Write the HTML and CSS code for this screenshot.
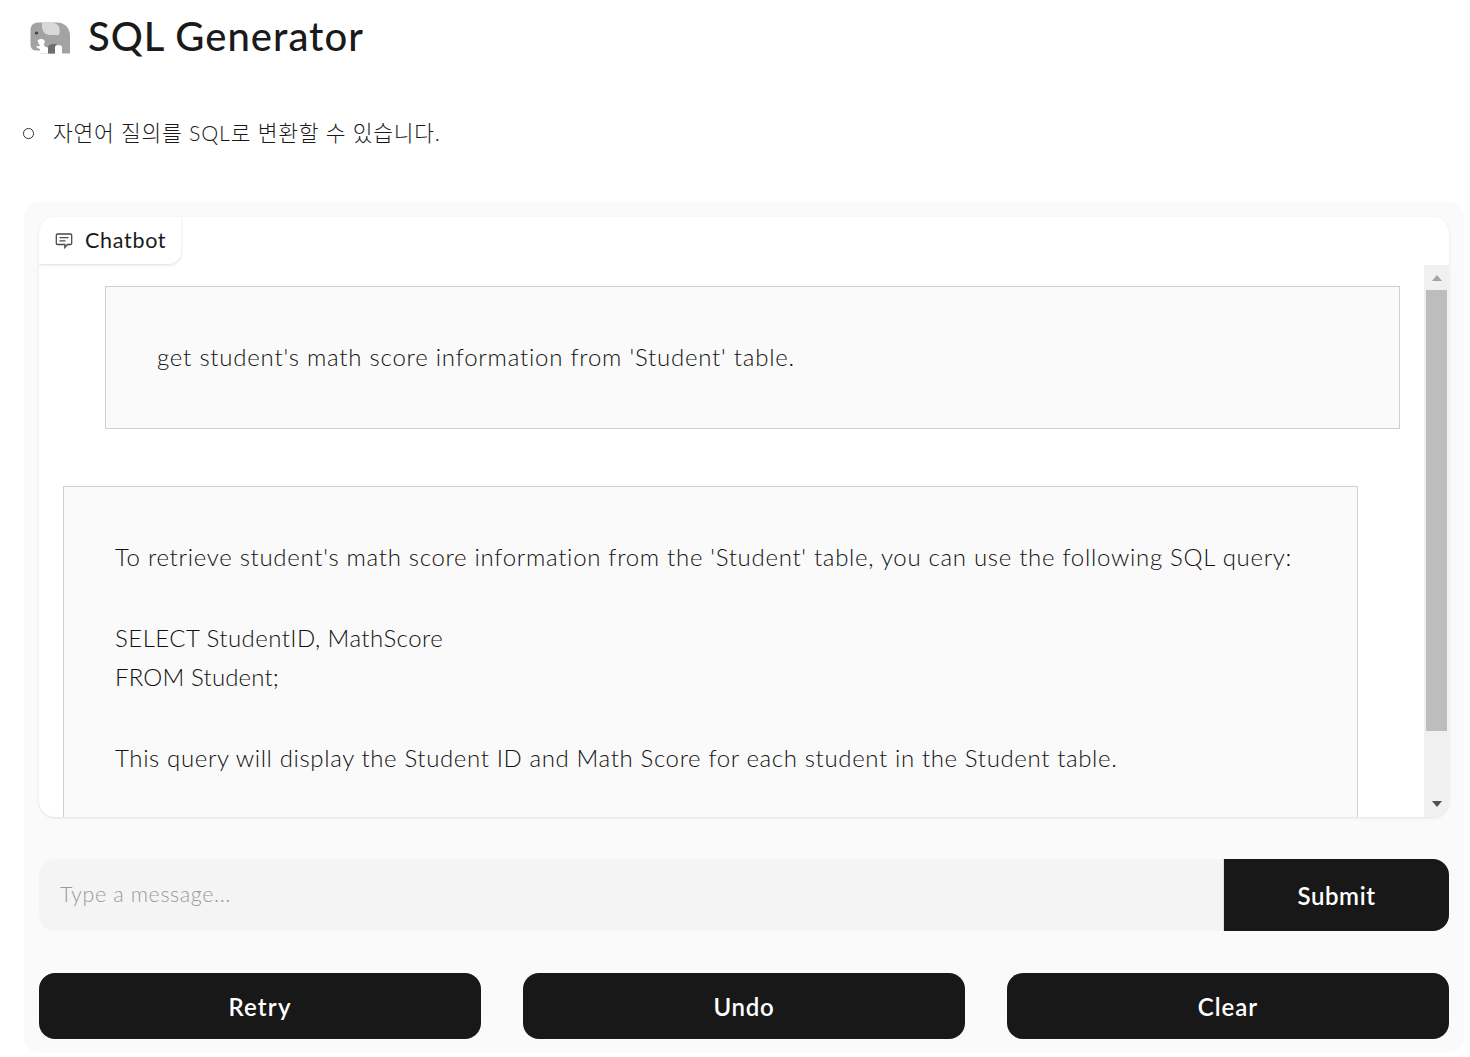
FILE: index.html
```html
<!DOCTYPE html>
<html lang="ko">
<head>
<meta charset="utf-8">
<title>SQL Generator</title>
<link rel="stylesheet" href="styles.css">
</head>
<body>
<header class="title">
  <svg class="elephant" viewBox="0 0 40 32" width="40" height="32" aria-hidden="true">
    <path fill="#a3a3a3" d="M8 .5h19C35 .5 40 6 40 14v17.500h-8v-6c0-1.500-1-2.500-3.500-2.500S25 24 25 25.500v6H10v-3H6C2.500 28.500.5 26 .5 22V8C.5 3.500 3.500.5 8 .5z"/>
    <path fill="#d9d9d9" d="M12 .5h9c3 0 6 1.500 7.500 3.500 1 1.500 1.500 4 1 7.500-.3 1-1 1.500-2 1.500H20c-5 0-8-4-8-9z"/>
    <path fill="#6e6e6e" d="M18 31.500v-7c1-1.500 3-2.500 5-2.500h5c-2 0-3 1.500-3 3.500v6z"/>
    <path fill="#fff" d="M8 18c2-1.500 5-1.500 6.500.5 1 1.500 0 3-1 4 1 2 2.500 3 4.500 3v6h-8v-4.500c-2-.5-3.500-1.500-4-3 1.500.5 3 .5 4-.5-1-1-2-3-2.500-5.500z"/>
    <circle cx="6.500" cy="11" r="1.600" fill="#3f3f3f"/>
  </svg>
  <h1 class="heading">SQL Generator</h1>
</header>
<ul class="intro"><li class="intro-item">자연어 질의를 SQL로 변환할 수 있습니다.</li></ul>
<main class="panel">
  <section class="chatbot">
    <div class="label">
      <svg class="label-icon" viewBox="0 0 18 16" width="18" height="16" aria-hidden="true">
        <path fill="none" stroke="#4a4a4a" stroke-width="1.300" d="M2.500 1h13a1.200 1.200 0 0 1 1.200 1.200v8.100a1.200 1.200 0 0 1-1.200 1.200h-3l-2.700 3 .1-3H2.500a1.200 1.200 0 0 1-1.200-1.200V2.200A1.200 1.200 0 0 1 2.500 1z"/>
        <path fill="none" stroke="#4a4a4a" stroke-width="1.300" d="M4.500 4.600h9M4.500 7.800h6"/>
      </svg>
      <span>Chatbot</span>
    </div>
    <div class="log">
      <div class="messages">
        <div class="msg user"><p class="ls-user">get student's math score information from 'Student' table.</p></div>
        <div class="msg bot">
          <p class="ls-one">To retrieve student's math score information from the 'Student' table, you can use the following SQL query:</p>
          <p class="code"><span class="ls-two">SELECT StudentID, MathScore</span><br><span class="ls-three">FROM Student;</span></p>
          <p class="ls-four closing">This query will display the Student ID and Math Score for each student in the Student table.</p>
        </div>
      </div>
      <div class="scrollbar">
        <span class="arrow up"></span>
        <span class="track"><span class="thumb"></span></span>
        <span class="arrow down"></span>
      </div>
    </div>
  </section>
  <form class="composer">
    <input class="input" type="text" placeholder="Type a message...">
    <button class="btn submit" type="button">Submit</button>
  </form>
  <div class="actions">
    <button class="btn ls-retry" type="button">Retry</button>
    <button class="btn ls-undo" type="button">Undo</button>
    <button class="btn ls-clear" type="button">Clear</button>
  </div>
</main>
</body>
</html>
```
FILE: styles.css
```css
* { box-sizing: border-box; }
html, body { margin: 0; height: 1057px; overflow: hidden; }
body {
  background: #fff;
  color: #1a1a1a;
  font-family: "Lato", "Noto Sans CJK KR", sans-serif;
  padding-left: 24px;
  width: 1464px;
}
.title { display: flex; align-items: flex-start; gap: 18px; height: 32px; margin: 20px 0 0 6px; }
.elephant { flex: none; margin-top: 2px; }
.heading { margin: 0; font-size: 40px; font-weight: 500; line-height: 32px; letter-spacing: 1px; }
.intro { margin: 51px 0 0; padding: 0 0 0 29px; font-size: 21.500px; height: 60px; list-style: none; font-weight: 300; }
.intro-item { position: relative; line-height: 60px; letter-spacing: .72px; }
.intro-item::before {
  content: "";
  position: absolute;
  left: -30px;
  top: 25px;
  width: 8.500px;
  height: 8.500px;
  border: 1.600px solid #333;
  border-radius: 50%;
}
.panel {
  margin-top: 39px;
  height: 851px;
  background: #fafafa;
  border-radius: 16px;
  padding: 15px;
  display: flex;
  flex-direction: column;
}
.chatbot {
  position: relative;
  height: 600px;
  background: #fff;
  border-radius: 16px;
  box-shadow: 0 1px 3px rgba(0,0,0,.1);
  overflow: hidden;
  flex: none;
}
.label {
  position: absolute;
  top: 0; left: 0;
  height: 47px;
  width: 142px;
  display: flex;
  align-items: center;
  gap: 12px;
  padding: 0 0 2px 16px;
  background: #fff;
  border-radius: 0 0 12px 0;
  box-shadow: 0 1px 3px rgba(0,0,0,.14);
  font-size: 21.500px;
  letter-spacing: .7px;
  z-index: 1;
}
.label-icon { margin-top: 2px; }
.log { display: flex; height: 100%; padding-top: 48px; }
.messages { flex: 1; min-width: 0; overflow: hidden; padding: 21px 24px 0 24px; display: flex; flex-direction: column; gap: 57px; }
.msg {
  flex: none;
  width: 1295px;
  background: #fafafa;
  border: 1px solid #cfcfcf;
  padding: 50px 51px 51px;
  font-size: 24px;
  font-weight: 300;
  line-height: 39px;
  color: #111;
}
.msg p { margin: 0; }
.msg .code { margin-top: 42px; }
.msg .closing { margin-top: 42px; }
.ls-user { letter-spacing: .77px; }
.ls-one { letter-spacing: .7px; }
.ls-two { letter-spacing: .45px; }
.ls-three { letter-spacing: .15px; }
.ls-four { letter-spacing: .63px; }
.user { align-self: flex-end; height: 143px; }
.bot { align-self: flex-start; height: 380px; }
.scrollbar { flex: none; width: 25px; background: #f0f0f0; display: flex; flex-direction: column; align-items: center; }
.arrow { flex: none; width: 0; height: 0; border-left: 5.500px solid transparent; border-right: 5.500px solid transparent; }
.up { margin-top: 10px; border-bottom: 6px solid #a3a3a3; }
.down { margin: 0 0 10px; border-top: 6px solid #505050; }
.track { flex: 1; width: 100%; padding: 9px 2px 0; }
.thumb { display: block; height: 441px; background: #bdbdbd; }
.composer { display: flex; height: 72px; margin-top: 42px; flex: none; border-radius: 16px; overflow: hidden; }
.input {
  flex: 1;
  min-width: 0;
  border: 0;
  border-right: 1px solid #ddd;
  background: #f4f4f4;
  padding: 0 21px 2px;
  font: 300 21.500px "Lato", sans-serif;
  letter-spacing: .6px;
  outline: none;
}
.input::placeholder { color: #9a9a9a; opacity: 1; }
.btn {
  border: 0;
  background: #181818;
  color: #fff;
  font: 600 24px "Lato", sans-serif;
  border-radius: 16px;
}
.submit { flex: none; width: 225px; border-radius: 0; letter-spacing: .6px; }
.actions { display: grid; grid-template-columns: repeat(3, 1fr); gap: 42px; height: 66px; margin-top: 42px; flex: none; }
.ls-retry { letter-spacing: 1.200px; }
.ls-undo { letter-spacing: .7px; }
.ls-clear { letter-spacing: 1px; }
```
